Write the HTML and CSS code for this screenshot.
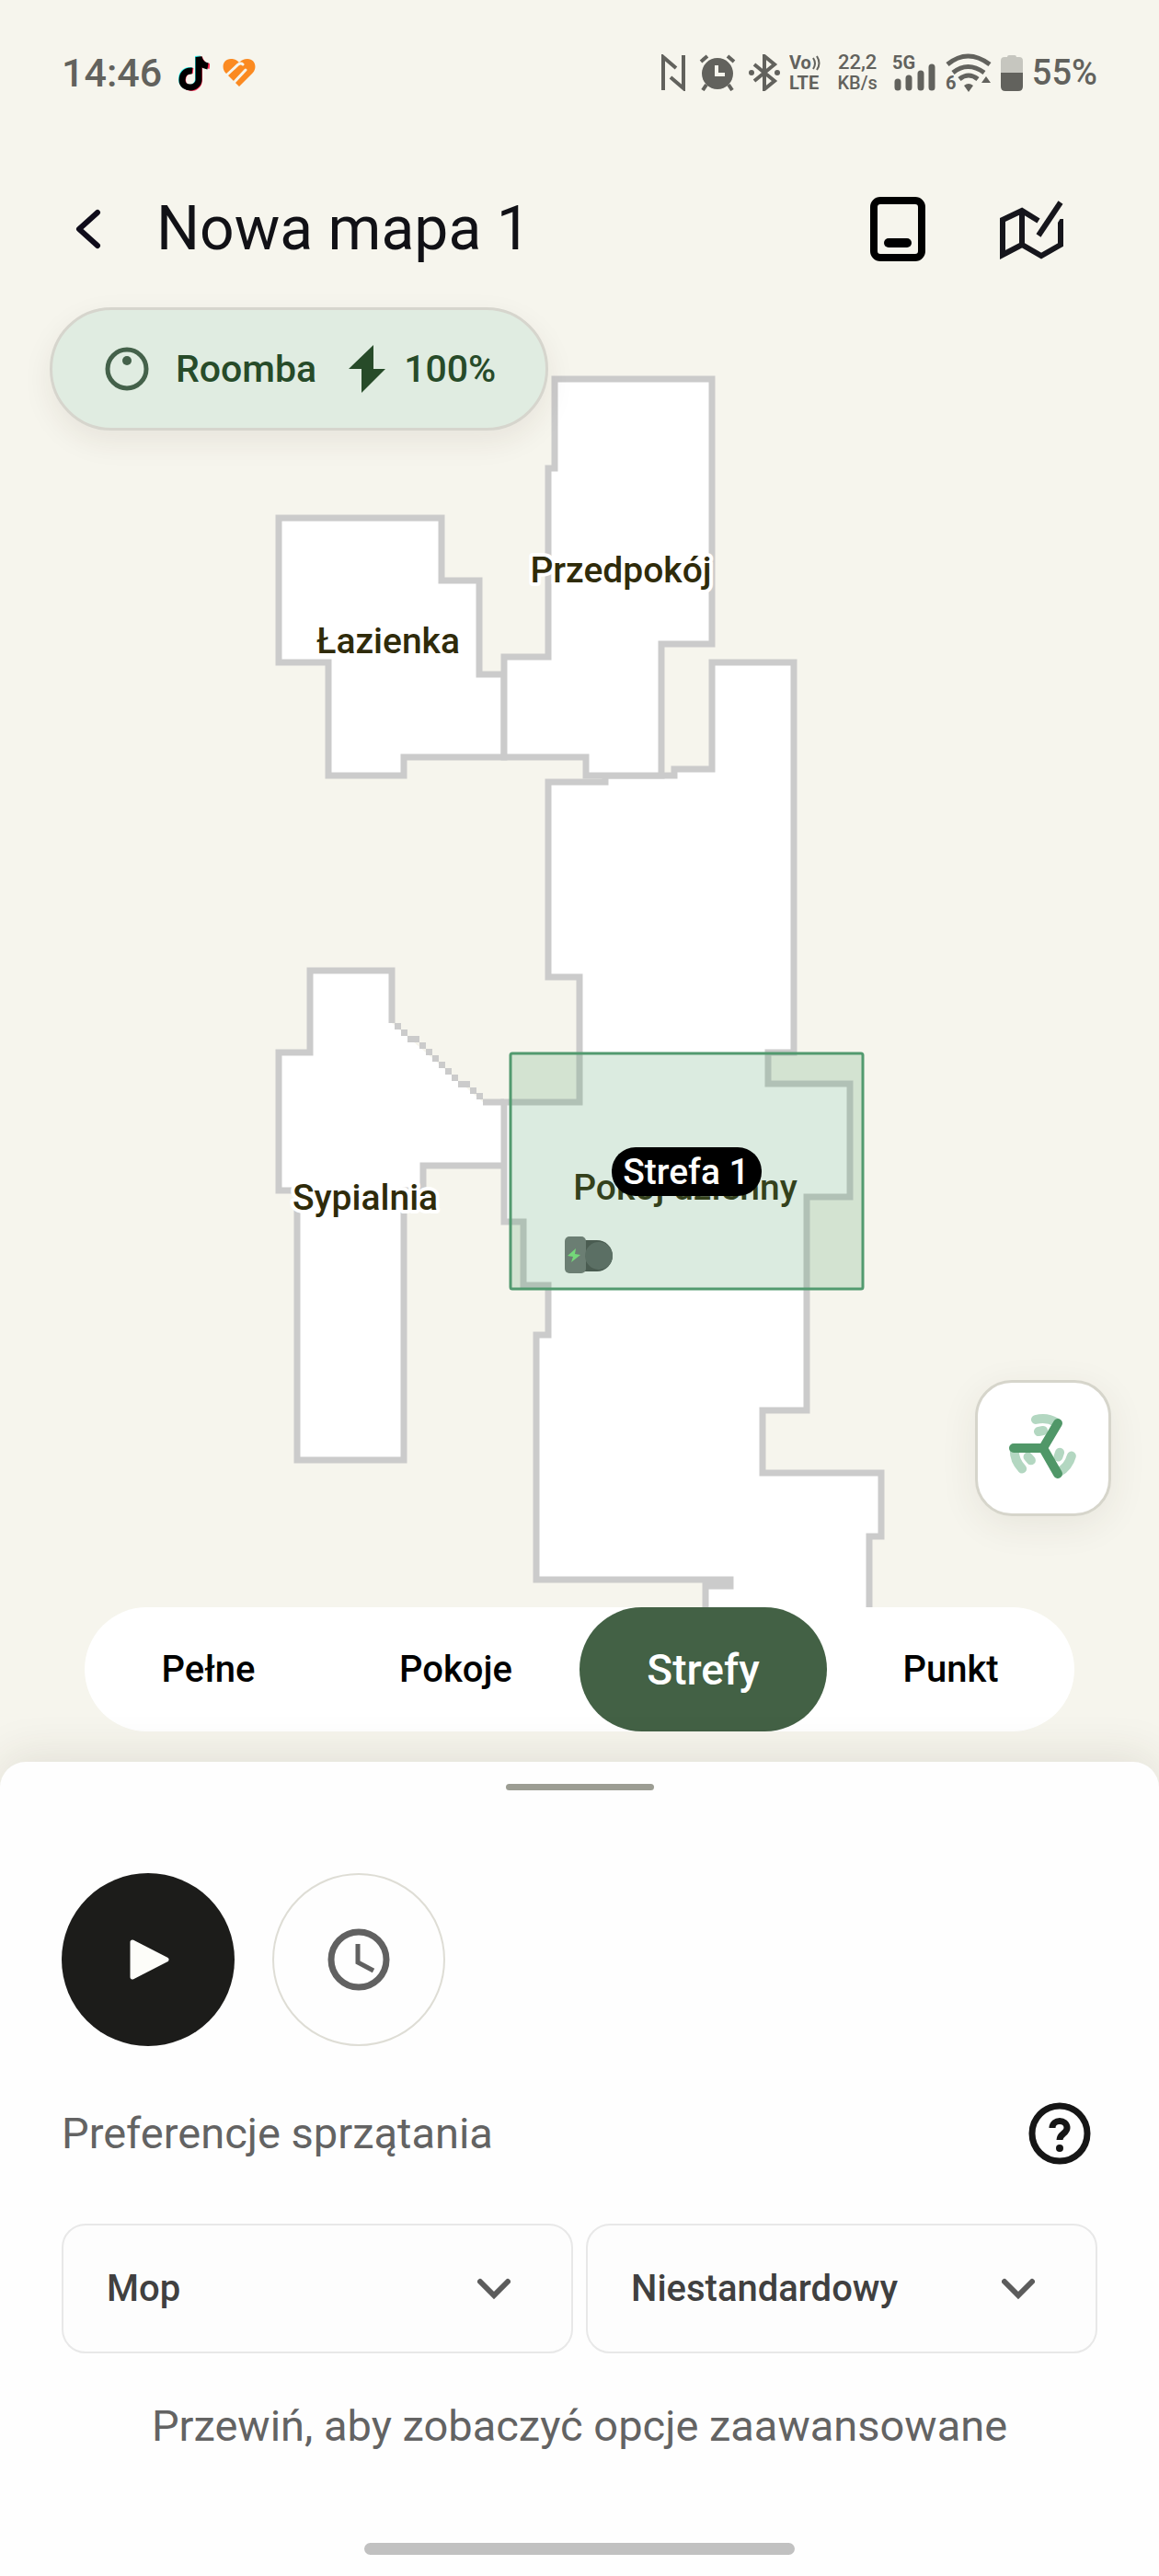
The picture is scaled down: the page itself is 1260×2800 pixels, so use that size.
FILE: index.html
```html
<!DOCTYPE html>
<html lang="pl">
<head>
<meta charset="utf-8">
<meta name="viewport" content="width=device-width, initial-scale=1">
<title>Nowa mapa 1</title>
<link rel="stylesheet" href="styles.css">
</head>
<body>
<div class="status">
  <span class="status-time">14:46</span>
  <svg class="icon" width="34" height="40" viewBox="0 0 34 40" aria-hidden="true">
    <g fill="none" stroke-width="6">
      <path stroke="#25f4ee" d="M14 17C6 16 3 22 3 27c0 6 5 9 9 9 5 0 9-4 9-9V2c1 5 4 9 10 10"/>
      <path stroke="#fe2c55" d="M16 19C8 18 5 24 5 29c0 6 5 9 9 9 5 0 9-4 9-9V4c1 5 4 9 11 10" transform="translate(0 -1)"/>
      <path stroke="#000" stroke-width="7" d="M15 18C7 17 4 23 4 28c0 6 5 8 9 8 5 0 9-4 9-8V3c1 5 4 9 10 10"/>
    </g>
  </svg>
  <svg class="icon status-heart" width="36" height="32" viewBox="0 0 36 32" aria-hidden="true">
    <path fill="#fb8a21" d="M18 31L3 16C-2 10 1 1 9 1c4 0 6 1 9 4 3-3 5-4 9-4 8 0 11 9 6 15z"/>
    <path fill="none" stroke="#f6f5ed" stroke-width="3" stroke-linecap="round" d="M4 19L17 7q3-2 5 0M12 27L25 13"/>
  </svg>
  <div class="status-right">
    <svg class="icon status-space" width="28" height="40" viewBox="0 0 28 40" aria-hidden="true"><path d="M3 39V3l14 12M25 1v36L11 25" fill="none" stroke="#62625d" stroke-width="4"/></svg>
    <svg class="icon status-space" width="40" height="40" viewBox="0 0 40 40" aria-hidden="true">
      <circle cx="20" cy="21" r="17" fill="#62625d"/>
      <path d="M2 8l7-6M38 8l-7-6M8 33l-4 6M32 33l4 6" stroke="#62625d" stroke-width="4"/>
      <path d="M19 12v10h9" fill="none" stroke="#f6f5ed" stroke-width="4"/>
    </svg>
    <svg class="icon" width="34" height="40" viewBox="0 0 34 40" aria-hidden="true">
      <path d="M6 11l22 18-11 9V2l11 9L6 29" fill="none" stroke="#62625d" stroke-width="4"/>
      <circle cx="3" cy="20" r="3" fill="#62625d"/><circle cx="31" cy="20" r="3" fill="#62625d"/>
    </svg>
    <svg class="icon" width="36" height="48" viewBox="0 -4 36 48" aria-hidden="true">
      <text class="status-mini" x="0" y="16">Vo</text><text class="status-mini" x="0" y="38">LTE</text>
      <path d="M26 4q4 6 0 12M30 2q5 8 0 15" fill="none" stroke="#62625d" stroke-width="2"/>
    </svg>
    <span class="status-speed"><span class="status-rate">22,2</span><span>KB/s</span></span>
    <svg class="icon" width="48" height="48" viewBox="0 -4 48 48" aria-hidden="true">
      <text class="status-mini" x="0" y="16">5G</text>
      <path d="M6 30v6M18 26v10M31 21v15M43 14v22" stroke="#62625d" stroke-width="7" stroke-linecap="round"/>
    </svg>
    <svg class="icon" width="50" height="48" viewBox="0 -4 50 48" aria-hidden="true">
      <path d="M2 11q22-18 46 0M8 20q16-13 34 0M15 27q10-8 20 0" fill="none" stroke="#62625d" stroke-width="5"/>
      <path d="M20 34q5-4 10 0l-5 7zM39 31l5-7 5 7z" fill="#62625d"/>
      <text class="status-mini" x="0" y="38">6</text>
    </svg>
    <svg class="icon" width="24" height="40" viewBox="0 0 24 40" aria-hidden="true">
      <path d="M0 20V7q0-4 4-4h3q0-2 2-2h6q2 0 2 2h3q4 0 4 4v13z" fill="#c6c6bf"/>
      <path d="M0 20h24v15q0 5-5 5H5q-5 0-5-5z" fill="#62625d"/>
    </svg>
    <span class="status-battery">55%</span>
  </div>
</div>

<header class="topbar">
  <button class="plain" type="button" aria-label="Wstecz">
    <svg class="icon" width="28" height="44" viewBox="0 0 28 44"><path d="M24 4L4 22l20 18" fill="none" stroke="#0f0c1a" stroke-width="6" stroke-linecap="round" stroke-linejoin="round"/></svg>
  </button>
  <h1 class="title">Nowa mapa 1</h1>
  <button class="plain" type="button" aria-label="Stacja dokująca">
    <svg class="icon" width="60" height="70" viewBox="0 0 60 70"><rect x="4" y="4" width="52" height="62" rx="7" fill="none" stroke="#000" stroke-width="8"/><path d="M20 50h20" stroke="#000" stroke-width="10" stroke-linecap="round"/></svg>
  </button>
  <button class="plain" type="button" aria-label="Edytuj mapę">
    <svg class="icon" width="72" height="70" viewBox="0 0 72 70"><g fill="none" stroke="#16161c" stroke-width="6"><path d="M43 26L25 15 4 25v38l21-11 21 12 21-12V24M25 15v37"/><path d="M43 42L67 6"/></g><path d="M60 27l9-13v6l-5 8z" fill="#f6f5ed"/></svg>
  </button>
</header>

<main class="map">
  <svg class="map-canvas" viewBox="0 334 1260 1581" role="img" aria-label="Mapa pomieszczeń">
    <g class="room">
      <path d="M303 563H480V631H521V733H548V823H439V843H357V720H303Z"/>
      <path d="M337 1055H426V1112L525 1198H548V1267H460V1294H439V1587H323V1294H303V1144H337Z" stroke="none"/>
      <path fill="none" d="M426 1112V1055H337V1144H303V1294H323V1587H439V1294H460V1267H548M525 1198H548"/>
      <path d="M596 850H658V843H733V836H774V720H863V1144H835V1178H924V1301H877V1533H829V1601H958V1670H945V1800H767V1724H794V1717H583V1451H596V1397H569V1328H548V1198H630V1062H596Z"/>
      <path d="M603 412H774V700H719V843H637V823H548V714H596V509H603Z"/>
    </g>
    <path class="steps" d="M429 1112h7v7h-7zM436 1119h7v7h-7zM443 1126h13v7h-13zM456 1133h7v7h-7zM463 1140h7v7h-7zM470 1147h7v7h-7zM477 1154h7v7h-7zM484 1161h7v7h-7zM491 1168h7v7h-7zM498 1175h13v7h-13zM511 1182h7v7h-7zM518 1188h7v7h-7z"/>
    <g class="room-label">
      <text x="675" y="633">Przedpokój</text>
      <text x="422" y="710">Łazienka</text>
      <text x="397" y="1315">Sypialnia</text>
      <text x="745" y="1304">Pokój dzienny</text>
    </g>
    <g>
      <path d="M635 1348h14a17 17 0 0 1 0 34h-14z" fill="#4a4d4d"/>
      <rect x="614" y="1344" width="23" height="40" rx="5" fill="#747777"/>
      <circle cx="651" cy="1365" r="15" fill="#606565"/>
      <path d="M626 1357l-9 8 6 1-2 6 10-8-6-1z" fill="#7fe87f"/>
    </g>
    <rect class="zone" x="555" y="1145" width="383" height="256" rx="2"/>
    <rect x="665" y="1247" width="163" height="53" rx="26"/>
    <text class="zone-label" x="746" y="1287">Strefa 1</text>
  </svg>

  <button class="robot-pill" type="button">
    <svg class="icon" width="48" height="48" viewBox="0 0 48 48" aria-hidden="true"><circle cx="24" cy="24" r="21" fill="none" stroke="#44614a" stroke-width="5"/><circle cx="24" cy="15" r="5" fill="#44614a"/></svg>
    <span class="robot-name">Roomba</span>
    <svg class="icon" width="40" height="54" viewBox="0 0 40 54" aria-hidden="true"><path d="M27 1v26h13L14 53V27H0z" fill="#274b29"/></svg>
    <span class="robot-charge">100%</span>
  </button>

  <button class="fan" type="button" aria-label="Moc ssania">
    <svg class="icon" width="76" height="76" viewBox="-38 -38 76 76">
      <g fill="none" stroke-width="10" stroke-linecap="round">
        <g stroke="#b3d7c1"><path id="arc" d="M-8-31Q4-34 14-28M-5-18L0-19"/><use href="#arc" transform="rotate(120)"/><use href="#arc" transform="rotate(240)"/></g>
        <path stroke="#509768" d="M0 0H-32M0 0L16-27M0 0L16 28"/>
      </g>
    </svg>
  </button>

  <nav class="modes">
    <button class="mode" type="button">Pełne</button>
    <button class="mode" type="button">Pokoje</button>
    <button class="mode mode-active" type="button" aria-pressed="true">Strefy</button>
    <button class="mode" type="button">Punkt</button>
  </nav>
</main>

<section class="sheet">
  <div class="handle"></div>
  <div class="actions">
    <button class="round round-play" type="button" aria-label="Start">
      <svg class="icon" width="48" height="48" viewBox="0 0 48 48"><path d="M7 5L44 24 7 43z" fill="#fdfdf9" stroke="#fdfdf9" stroke-width="5" stroke-linejoin="round"/></svg>
    </button>
    <button class="round round-clock" type="button" aria-label="Harmonogram">
      <svg class="icon" width="68" height="68" viewBox="0 0 68 68"><g fill="none" stroke="#616161"><circle cx="34" cy="34" r="30" stroke-width="7"/><path d="M33 17v20l17 9" stroke-width="5"/></g></svg>
    </button>
  </div>
  <div class="prefs-head">
    <h2 class="prefs-title">Preferencje sprzątania</h2>
    <button class="plain" type="button" aria-label="Pomoc">
      <svg class="icon" width="68" height="68" viewBox="0 0 68 68"><circle cx="34" cy="34" r="30" fill="none" stroke="#161616" stroke-width="7"/><path d="M26 28c0-10 16-10 16 0 0 6-8 6-8 13" fill="none" stroke="#161616" stroke-width="7"/><circle cx="34" cy="50" r="4" fill="#161616"/></svg>
    </button>
  </div>
  <div class="selects">
    <label class="select-box">
      <select class="select" aria-label="Tryb sprzątania"><option>Mop</option></select>
      <svg class="icon chevron" width="36" height="24" viewBox="0 0 36 24" aria-hidden="true"><path d="M3 4l15 15L33 4" fill="none" stroke="#5c5c5c" stroke-width="6" stroke-linecap="round"/></svg>
    </label>
    <label class="select-box">
      <select class="select" aria-label="Ustawienia"><option>Niestandardowy</option></select>
      <svg class="icon chevron" width="36" height="24" viewBox="0 0 36 24" aria-hidden="true"><path d="M3 4l15 15L33 4" fill="none" stroke="#5c5c5c" stroke-width="6" stroke-linecap="round"/></svg>
    </label>
  </div>
  <p class="hint">Przewiń, aby zobaczyć opcje zaawansowane</p>
  <div class="home-bar"></div>
</section>
</body>
</html>
```
FILE: styles.css
```css
* {
  box-sizing: border-box;
}

body {
  margin: 0;
  min-height: 100vh;
  display: flex;
  flex-direction: column;
  background: #f6f5ed;
  color: #111;
  font-family: Roboto, "Liberation Sans", sans-serif;
}

button {
  font: inherit;
  color: inherit;
  border: 0;
  padding: 0;
  background: none;
}

.icon {
  display: block;
  flex: none;
}

.plain {
  flex: none;
}

.status {
  display: flex;
  align-items: center;
  height: 160px;
  padding: 0 67px 2px;
  color: #62625d;
}

.status-time {
  margin-right: 18px;
  font-size: 43px;
  font-weight: 500;
}

.status-heart {
  margin-left: 14px;
}

.status-right {
  display: flex;
  align-items: center;
  gap: 10px;
  margin-left: auto;
}

.status-space {
  margin-right: 4px;
}

.status-mini {
  font-size: 20px;
  font-weight: 700;
  fill: #62625d;
}

.status-speed {
  display: flex;
  flex-direction: column;
  align-items: center;
  padding: 0 6px;
  font-size: 20px;
  line-height: 23px;
  font-weight: 500;
}

.status-rate {
  font-size: 22px;
}

.status-battery {
  font-size: 38px;
  font-weight: 500;
}

.topbar {
  display: flex;
  align-items: center;
  height: 174px;
  padding: 4px 102px 0 82px;
}

.title {
  flex: 1;
  margin: 0 0 0 60px;
  font-size: 66px;
  line-height: 78px;
  font-weight: 400;
  color: #111116;
}

.topbar .plain + .plain {
  margin-left: 80px;
}

.map {
  position: relative;
}

.map-canvas {
  display: block;
  width: 100%;
  height: auto;
}

.room {
  fill: #fff;
  stroke: #cbcbcb;
  stroke-width: 7px;
}

.steps {
  fill: #cbcbcb;
}

.room-label {
  font-size: 39px;
  font-weight: 500;
  text-anchor: middle;
  fill: #2f2b0a;
  stroke: #fff;
  stroke-width: 8px;
  stroke-linejoin: round;
  paint-order: stroke;
}

.zone {
  fill: rgba(75, 155, 100, 0.2);
  stroke: #529a6f;
  stroke-width: 3px;
}

.zone-label {
  font-size: 39px;
  font-weight: 500;
  text-anchor: middle;
  fill: #fff;
}

.robot-pill {
  position: absolute;
  top: 0;
  left: 54px;
  display: flex;
  align-items: center;
  height: 134px;
  padding: 0 54px 0 57px;
  border: 3px solid #d6d5cd;
  border-radius: 67px;
  background: #e0ece1;
  box-shadow: 0 12px 32px rgba(60, 40, 30, 0.08);
  color: #274b29;
  font-size: 41px;
  font-weight: 500;
}

.robot-name {
  margin: 0 35px 0 29px;
}

.robot-charge {
  margin-left: 20px;
}

.fan {
  position: absolute;
  right: 52px;
  bottom: 267px;
  display: grid;
  place-items: center;
  width: 148px;
  height: 148px;
  border: 3px solid #d6d5cb;
  border-radius: 40px;
  background: #fff;
  box-shadow: 0 10px 40px rgba(60, 50, 40, 0.08);
}

.modes {
  position: absolute;
  left: 92px;
  right: 92px;
  bottom: 33px;
  display: grid;
  grid-template-columns: repeat(4, 1fr);
  height: 135px;
  border-radius: 68px;
  background: #fff;
  color: #000;
}

.mode {
  border-radius: 68px;
  font-size: 40px;
  font-weight: 500;
}

.mode-active {
  background: #436145;
  color: #fff;
  font-size: 46px;
}

.sheet {
  position: relative;
  flex: 1;
  display: flex;
  flex-direction: column;
  padding: 24px 67px 23px;
  border-radius: 28px 28px 0 0;
  background: #fefefe;
  box-shadow: 0 -8px 48px rgba(60, 50, 30, 0.1);
}

.handle {
  align-self: center;
  width: 161px;
  height: 7px;
  border-radius: 4px;
  background: #9c9d93;
}

.actions {
  display: flex;
  gap: 41px;
  margin-top: 90px;
}

.round {
  display: grid;
  place-items: center;
  width: 188px;
  height: 188px;
  border-radius: 50%;
}

.round-play {
  background: #1c1c1a;
}

.round-clock {
  border: 2px solid #deddd5;
}

.prefs-head {
  display: flex;
  align-items: center;
  justify-content: space-between;
  margin-top: 61px;
  padding-right: 7px;
}

.prefs-title {
  margin: 0;
  font-size: 47px;
  line-height: 56px;
  font-weight: 400;
  color: #636363;
}

.selects {
  display: grid;
  grid-template-columns: 1fr 1fr;
  gap: 14px;
  margin-top: 64px;
}

.select-box {
  display: grid;
  align-items: center;
}

.select {
  grid-area: 1 / 1;
  width: 100%;
  height: 141px;
  padding: 0 100px 0 47px;
  border: 2px solid #e8e8e8;
  border-radius: 26px;
  background: #fdfdfd;
  appearance: none;
  font: 500 40px/48px Roboto, "Liberation Sans", sans-serif;
  color: #404040;
}

.chevron {
  grid-area: 1 / 1;
  justify-self: end;
  margin-right: 68px;
  pointer-events: none;
}

.hint {
  margin: 51px 0 0;
  text-align: center;
  font-size: 47px;
  line-height: 56px;
  color: #636363;
}

.home-bar {
  align-self: center;
  width: 468px;
  height: 13px;
  margin-top: auto;
  border-radius: 7px;
  background: #c1c1c1;
}
```
